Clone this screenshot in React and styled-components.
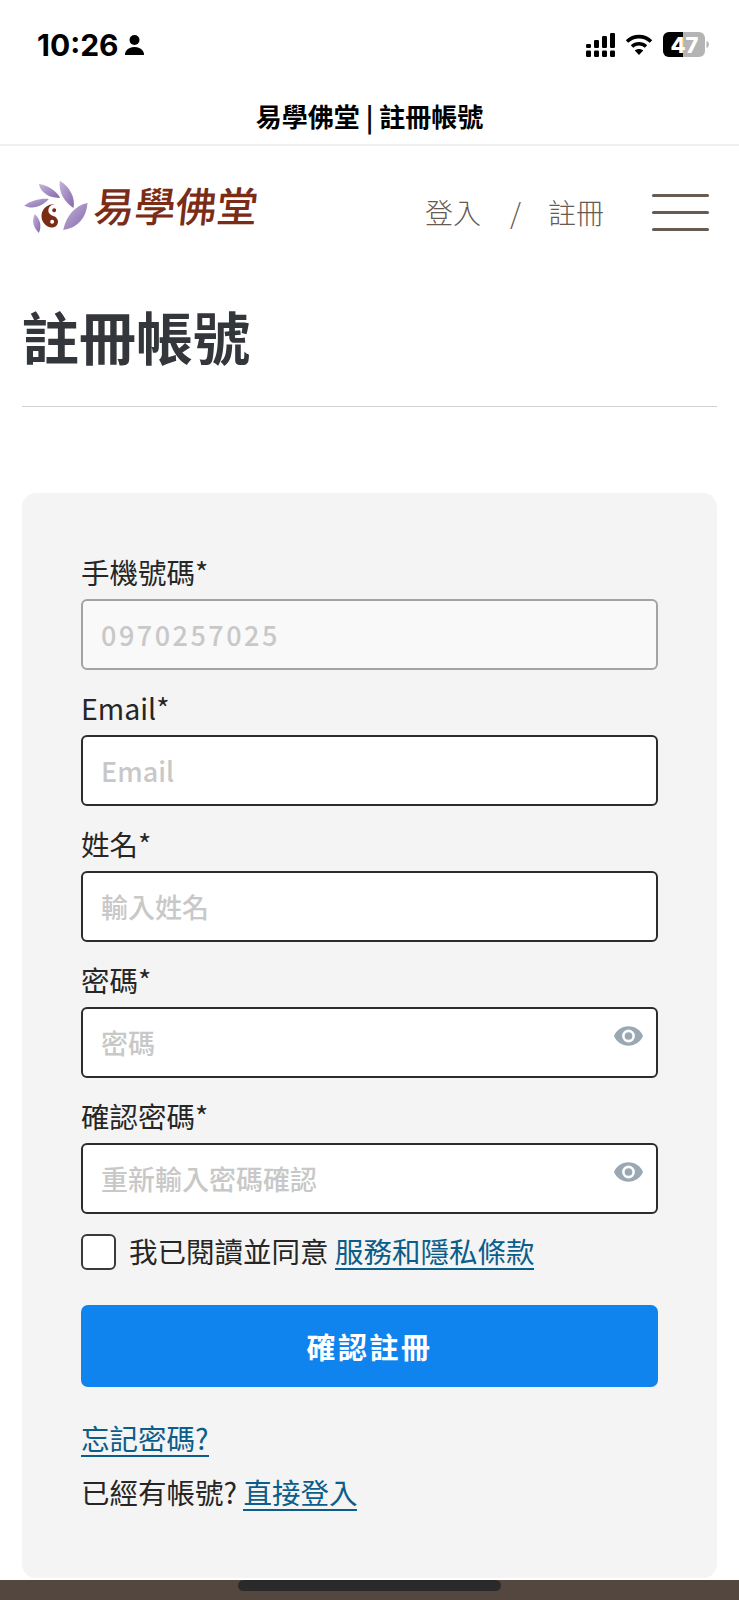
import React from "react";
import styled, { createGlobalStyle } from "styled-components";

const CJK = `"Noto Sans CJK TC", "Noto Sans", sans-serif`;

const GlobalStyle = createGlobalStyle`
  html, body {
    margin: 0;
    padding: 0;
    background: #fff;
  }
  * {
    box-sizing: border-box;
  }
`;

const Page = styled.div`
  width: 739px;
  height: 1600px;
  position: relative;
  overflow: hidden;
  display: flex;
  flex-direction: column;
  background: #fff;
  font-family: ${CJK};
  color: #2b2b2b;
`;

const StatusBar = styled.div`
  height: 89px;
  padding: 0 30px 0 37px;
  display: flex;
  align-items: center;
  justify-content: space-between;
`;

const Time = styled.div`
  display: flex;
  align-items: center;
  gap: 6px;
  font-family: "Inter", "Liberation Sans", sans-serif;
  font-size: 30px;
  font-weight: 700;
  color: #000;
`;

const StatusIcons = styled.div`
  display: flex;
  align-items: center;
  gap: 10px;
`;

const BrowserTitle = styled.div`
  height: 57px;
  border-bottom: 2px solid #efefef;
  display: flex;
  justify-content: center;
  align-items: flex-start;
  font-size: 26px;
  line-height: 54px;
  font-weight: 700;
  color: #000;
`;

const Header = styled.header`
  height: 120px;
  padding: 0 30px 0 23px;
  display: flex;
  align-items: center;
`;

const Logo = styled.div`
  display: flex;
  align-items: center;
  gap: 5px;
`;

const LogoText = styled.span`
  margin-bottom: 4px;
  font-size: 41px;
  line-height: 1;
  font-weight: 500;
  color: #7b2c17;
  transform: skewX(-6deg);
`;

const Nav = styled.nav`
  margin-left: auto;
  padding-top: 12px;
  display: flex;
  align-items: center;
  font-size: 28px;
  font-weight: 300;
  color: #675a50;
`;

const Slash = styled.span`
  margin: 0 27px 0 29px;
`;

const Burger = styled.div`
  margin-left: 48px;
  width: 57px;
  display: flex;
  flex-direction: column;
  gap: 14px;
`;

const BurgerLine = styled.span`
  height: 3px;
  border-radius: 2px;
  background: #675a50;
`;

const Main = styled.main`
  flex: 1;
  padding: 32px 22px 0;
  display: flex;
  flex-direction: column;
`;

const Heading = styled.h1`
  margin: 0;
  padding-bottom: 33px;
  border-bottom: 1px solid #d2d2d2;
  font-size: 57px;
  line-height: 75px;
  font-weight: 700;
  color: #33363a;
`;

const Card = styled.section`
  margin-top: 86px;
  flex: 1;
  padding: 57px 59px 0;
  border-radius: 14px;
  background: #f4f4f4;
`;

const FieldBlock = styled.div`
  height: 136px;
  display: flex;
  flex-direction: column;
  justify-content: flex-end;
  &:first-child {
    height: 120px;
  }
`;

const Label = styled.label`
  font-size: 28.5px;
  line-height: 38px;
  margin-bottom: 8px;
  font-weight: 400;
  color: #262626;
`;

const InputWrap = styled.div`
  position: relative;
  height: 71px;
`;

const Input = styled.input`
  width: 100%;
  height: 100%;
  padding: 0 60px 0 18px;
  border: 2px solid ${({ disabled }) => (disabled ? "#a3a3a3" : "#2c2c2c")};
  border-radius: 6px;
  background: ${({ disabled }) => (disabled ? "#f9f9f9" : "#fff")};
  font-family: ${CJK};
  font-size: 27px;
  font-weight: 500;
  letter-spacing: ${({ disabled }) => (disabled ? "2.5px" : "0")};
  outline: none;
  &::placeholder {
    color: #c8c8c8;
    opacity: 1;
  }
`;

const EyeIcon = styled.svg`
  position: absolute;
  right: 15px;
  top: 19px;
  width: 29px;
  height: 20px;
`;

const CheckRow = styled.div`
  margin-top: 19px;
  display: flex;
  align-items: center;
  gap: 13px;
  font-size: 28.5px;
  line-height: 36px;
  font-weight: 400;
  color: #262626;
`;

const CheckBox = styled.span`
  width: 35px;
  height: 36px;
  border: 2px solid #3a3a3a;
  border-radius: 6px;
  background: #fff;
`;

const TextLink = styled.a`
  display: inline-block;
  line-height: 35px;
  color: #0b5d8a;
  border-bottom: 2px solid #0b5d8a;
  font-weight: 400;
`;

const SubmitButton = styled.button`
  margin-top: 35px;
  width: 100%;
  height: 82px;
  border: 0;
  border-radius: 7px;
  background: #0f83ee;
  color: #fff;
  font-family: ${CJK};
  font-size: 29px;
  font-weight: 700;
  letter-spacing: 2.5px;
`;

const LinkLine = styled.div`
  height: 38px;
  font-size: 28.5px;
  line-height: 38px;
  font-weight: 400;
  color: #262626;
  margin-top: ${({ $gap }) => $gap}px;
`;

const Footer = styled.footer`
  height: 20px;
  margin-top: 2px;
  background: #54473f;
`;

const HomeBar = styled.div`
  position: absolute;
  left: 238px;
  bottom: 9px;
  width: 263px;
  height: 11px;
  border-radius: 6px;
  background: #2a2a2a;
`;

function PersonIcon() {
  return (
    <svg width="19" height="20" viewBox="0 0 19 20">
      <circle cx="9.5" cy="5" r="5" fill="#000" />
      <path d="M0 20c0-1 0-3 1.500-4.500C3 13.500 6 12 9.500 12s6.500 1.500 8 3.500C19 17 19 19 19 20z" fill="#000" />
    </svg>
  );
}

function SignalIcon() {
  const columns = [
    { x: 0, top: 11 },
    { x: 8, top: 7 },
    { x: 16, top: 3 },
    { x: 24, top: 0 },
  ];
  return (
    <svg width="29" height="24" viewBox="0 0 29 24">
      {columns.map((c) => (
        <g key={c.x} fill="#000">
          <rect x={c.x} y={c.top} width="5" height={15 - c.top} rx="1.2" />
          <rect x={c.x} y="17.500" width="5" height="6.500" rx="1.2" />
        </g>
      ))}
    </svg>
  );
}

function WifiIcon() {
  return (
    <svg width="28" height="21" viewBox="0 0 28 21">
      <path d="M2 7.500C9 1 19 1 26 7.500" fill="none" stroke="#000" strokeWidth="3.600" />
      <path d="M7 12.500c4-3.600 10-3.600 14 0" fill="none" stroke="#000" strokeWidth="3.600" />
      <path d="M14 21l-4.200-4.500c2.400-2 6-2 8.400 0z" fill="#000" />
    </svg>
  );
}

function BatteryIcon() {
  return (
    <svg width="46" height="25" viewBox="0 0 46 25">
      <rect x="0" y="0" width="42" height="25" rx="6" fill="#b4b4b4" />
      <path d="M6 0h14v25H6a6 6 0 0 1-6-6V6a6 6 0 0 1 6-6z" fill="#000" />
      <path d="M43.500 9c1.600.5 2.500 2 2.500 3.500s-.9 3-2.500 3.500z" fill="#b4b4b4" />
      <text x="21.500" y="20.500" textAnchor="middle" fontFamily="Inter, Liberation Sans, sans-serif" fontSize="22" fontWeight="800" fill="#fff">47</text>
    </svg>
  );
}

function LotusIcon() {
  return (
    <svg width="66" height="55" viewBox="25 25 197 165">
      <defs>
        <linearGradient id="petal" x1="0" y1="0" x2="1" y2="1">
          <stop offset="0" stopColor="#c4b4da" />
          <stop offset="1" stopColor="#8468aa" />
        </linearGradient>
      </defs>
      <g fill="url(#petal)">
        <path d="M72 40C95 42 125 60 136 82 110 82 80 72 72 40z" />
        <path d="M135 30C165 48 182 80 176 112 150 95 130 65 135 30z" />
        <path d="M28 105C50 88 80 82 102 85 85 105 55 118 28 105z" />
        <path d="M218 97C215 140 190 172 145 178 155 135 180 105 218 97z" />
        <path d="M72 187C55 170 50 150 60 130 75 145 82 165 72 187z" />
      </g>
      <g transform="translate(115 136) rotate(10)">
        <path d="M0-35A35 35 0 0 0 0 35 17.500 17.500 0 0 0 0 0 17.500 17.500 0 0 1 0-35z" fill="#7b2c17" />
        <circle cx="0" cy="-17.500" r="6" fill="#7b2c17" />
        <circle cx="0" cy="17.500" r="6" fill="#fff" />
      </g>
    </svg>
  );
}

function Eye() {
  return (
    <EyeIcon viewBox="0 0 24 16">
      <path
        d="M12 0C6.500 0 2 3.300 0 8c2 4.700 6.500 8 12 8s10-3.300 12-8c-2-4.700-6.500-8-12-8zm0 13.300A5.300 5.300 0 1 1 12 2.700a5.300 5.300 0 0 1 0 10.600zM12 4.800a3.200 3.200 0 1 0 0 6.400 3.200 3.200 0 0 0 0-6.400z"
        fill="#9aa8b4"
      />
    </EyeIcon>
  );
}

function App() {
  return (
    <Page>
      <GlobalStyle />
      <StatusBar>
        <Time>
          10:26
          <PersonIcon />
        </Time>
        <StatusIcons>
          <SignalIcon />
          <WifiIcon />
          <BatteryIcon />
        </StatusIcons>
      </StatusBar>
      <BrowserTitle>易學佛堂 | 註冊帳號</BrowserTitle>
      <Header>
        <Logo>
          <LotusIcon />
          <LogoText>易學佛堂</LogoText>
        </Logo>
        <Nav>
          <span>登入</span>
          <Slash>/</Slash>
          <span>註冊</span>
          <Burger>
            <BurgerLine />
            <BurgerLine />
            <BurgerLine />
          </Burger>
        </Nav>
      </Header>
      <Main>
        <Heading>註冊帳號</Heading>
        <Card>
          <FieldBlock>
            <Label>手機號碼*</Label>
            <InputWrap>
              <Input disabled placeholder="0970257025" />
            </InputWrap>
          </FieldBlock>
          <FieldBlock>
            <Label>Email*</Label>
            <InputWrap>
              <Input placeholder="Email" />
            </InputWrap>
          </FieldBlock>
          <FieldBlock>
            <Label>姓名*</Label>
            <InputWrap>
              <Input placeholder="輸入姓名" />
            </InputWrap>
          </FieldBlock>
          <FieldBlock>
            <Label>密碼*</Label>
            <InputWrap>
              <Input placeholder="密碼" />
              <Eye />
            </InputWrap>
          </FieldBlock>
          <FieldBlock>
            <Label>確認密碼*</Label>
            <InputWrap>
              <Input placeholder="重新輸入密碼確認" />
              <Eye />
            </InputWrap>
          </FieldBlock>
          <CheckRow>
            <CheckBox />
            <span>
              我已閱讀並同意 <TextLink>服務和隱私條款</TextLink>
            </span>
          </CheckRow>
          <SubmitButton>確認註冊</SubmitButton>
          <LinkLine $gap={32}>
            <TextLink>忘記密碼?</TextLink>
          </LinkLine>
          <LinkLine $gap={16}>
            已經有帳號? <TextLink>直接登入</TextLink>
          </LinkLine>
        </Card>
      </Main>
      <Footer />
      <HomeBar />
    </Page>
  );
}

export default App;
